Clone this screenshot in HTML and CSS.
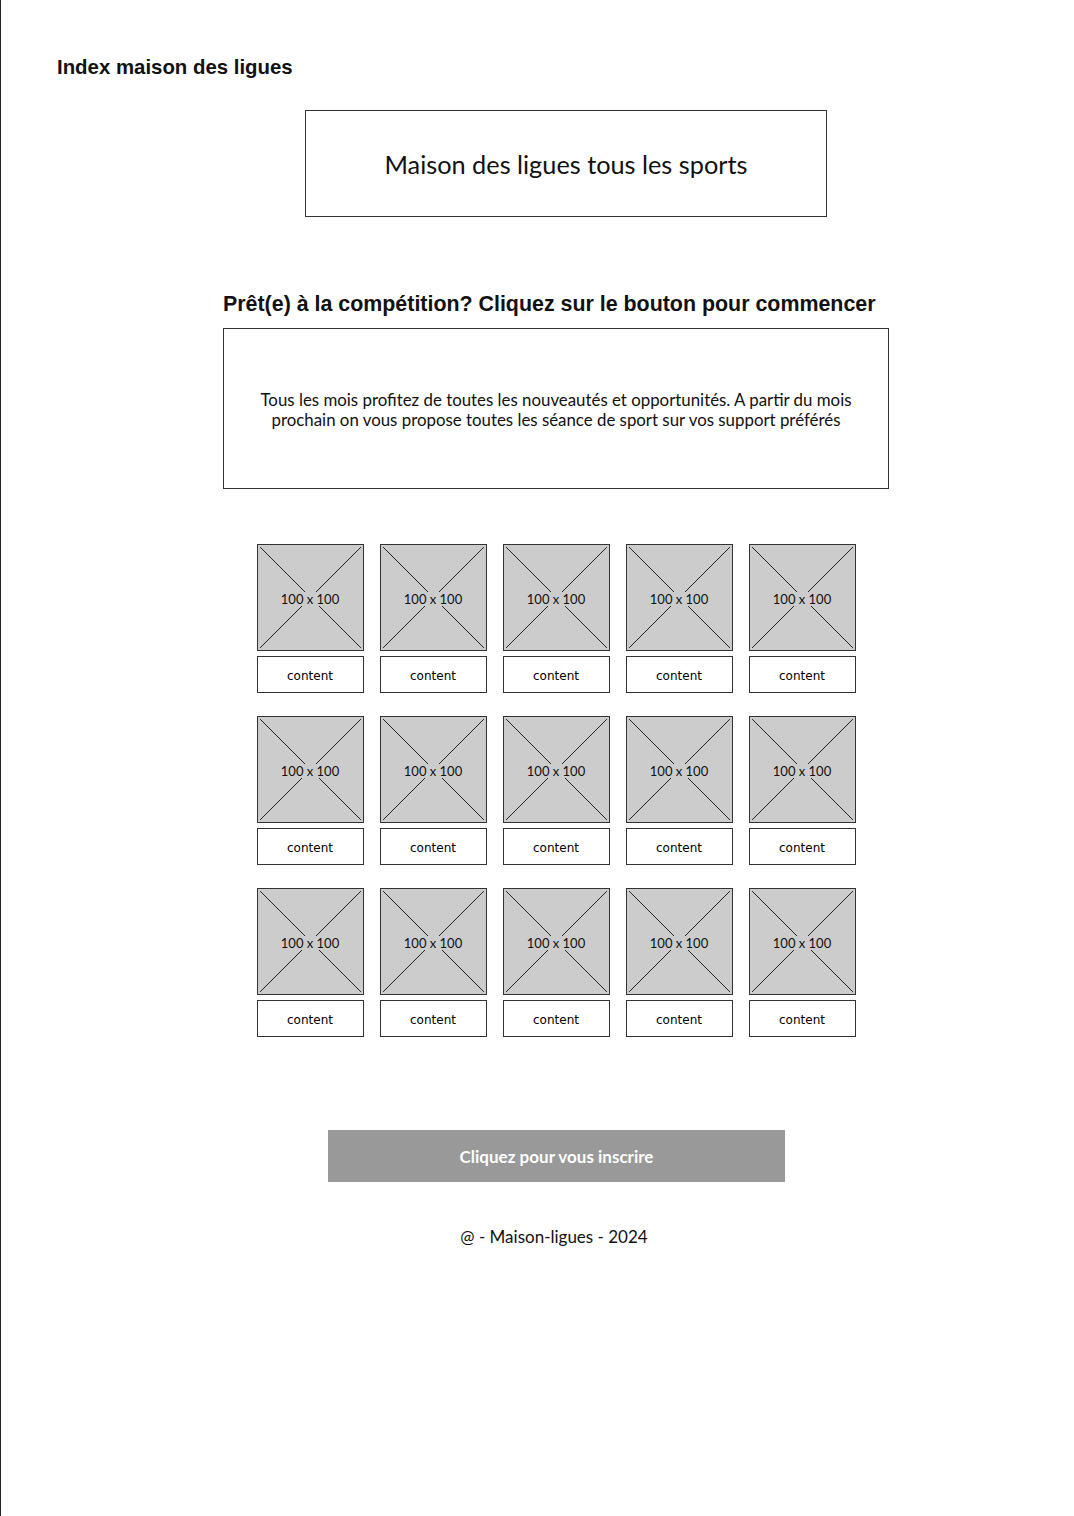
FILE: index.html
```html
<!DOCTYPE html>
<html lang="fr">
<head>
    <meta charset="UTF-8">
    <title>Index maison des ligues</title>
    <link rel="stylesheet" href="styles.css">
</head>
<body>
    <h1 class="page-title">Index maison des ligues</h1>

    <main class="column">
        <div class="banner">Maison des ligues tous les sports</div>

        <h2 class="lead">Prêt(e) à la compétition? Cliquez sur le bouton pour commencer</h2>

        <div class="intro">
            <p>Tous les mois profitez de toutes les nouveautés et opportunités. A partir du mois prochain on vous propose toutes les séance de sport sur vos support préférés</p>
        </div>

        <div class="grid" id="Grid"></div>

        <div class="cta">Cliquez pour vous inscrire</div>

        <footer class="footer">@ - Maison-ligues - 2024</footer>
    </main>

<script>
"use strict";
const cards = [];
for (let i = 0; i < 15; i++) {
    cards.push(
        `<div class="card">
    <div class="thumb">
        <svg viewBox="0 0 100 100" preserveAspectRatio="none"><line x1="2" y1="2" x2="98" y2="98"/><line x1="98" y1="2" x2="2" y2="98"/></svg>
        <span>100 x 100</span>
    </div>
    <div class="label">content</div>
</div>`);
}
document.getElementById("Grid").innerHTML = cards.join("");
</script>
</body>
</html>
```

FILE: styles.css
```css
html,
body {
    margin: 0;
    padding: 0;
    background: white;
}
body {
    min-height: 1516px;
    border-left: 1px solid #222;
    box-sizing: border-box;
    font-family: Lato, "Open Sans", sans-serif;
    color: #111;
}
.page-title {
    margin: 0;
    padding: 55px 0 0 56px;
    font-family: "Liberation Sans", Arial, sans-serif;
    font-size: 20.4px;
    line-height: 24px;
    font-weight: bold;
}
.column {
    width: 666px;
    margin-left: 222px;
}
.banner {
    margin: 31px 0 0 82px;
    width: 522px;
    height: 107px;
    box-sizing: border-box;
    border: 1px solid #333;
    display: flex;
    align-items: center;
    justify-content: center;
    font-size: 25.3px;
    padding-top: 1px;
}
.lead {
    margin: 75px 0 0;
    font-family: "Liberation Sans", Arial, sans-serif;
    font-size: 21.4px;
    line-height: 24px;
    font-weight: bold;
}
.intro {
    margin-top: 12px;
    height: 161px;
    box-sizing: border-box;
    border: 1px solid #333;
    display: flex;
    align-items: center;
    justify-content: center;
    padding: 2px 30px 0;
}
.intro p {
    margin: 0;
    text-align: center;
    font-size: 16.85px;
    line-height: 20px;
}
.grid {
    margin-top: 55px;
    display: grid;
    grid-template-columns: repeat(5, 107px);
    column-gap: 16px;
    row-gap: 23px;
    justify-content: center;
}
.card {
    display: flex;
    flex-direction: column;
    gap: 5px;
}
.thumb {
    position: relative;
    height: 107px;
    box-sizing: border-box;
    border: 1px solid #333;
    background: #ccc;
    display: flex;
    align-items: center;
    justify-content: center;
}
.thumb svg {
    position: absolute;
    inset: 0;
    width: 100%;
    height: 100%;
}
.thumb line {
    stroke: #222;
    stroke-width: 1;
    vector-effect: non-scaling-stroke;
}
.thumb span {
    position: relative;
    top: 1px;
    background: #ccc;
    padding: 0 2px;
    font-size: 13px;
    line-height: 14px;
    color: #111;
}
.label {
    height: 37px;
    box-sizing: border-box;
    border: 1px solid #333;
    display: flex;
    align-items: center;
    justify-content: center;
    padding-top: 3px;
    font-family: "DejaVu Sans", sans-serif;
    font-size: 12px;
    color: #000;
}
.cta {
    margin: 93px 0 0 105px;
    width: 457px;
    height: 52px;
    background: #999;
    color: white;
    display: flex;
    align-items: center;
    justify-content: center;
    font-size: 17px;
    font-weight: bold;
}
.footer {
    margin-top: 45px;
    text-align: center;
    font-size: 17px;
    line-height: 20px;
    padding-right: 4px;
}
```
